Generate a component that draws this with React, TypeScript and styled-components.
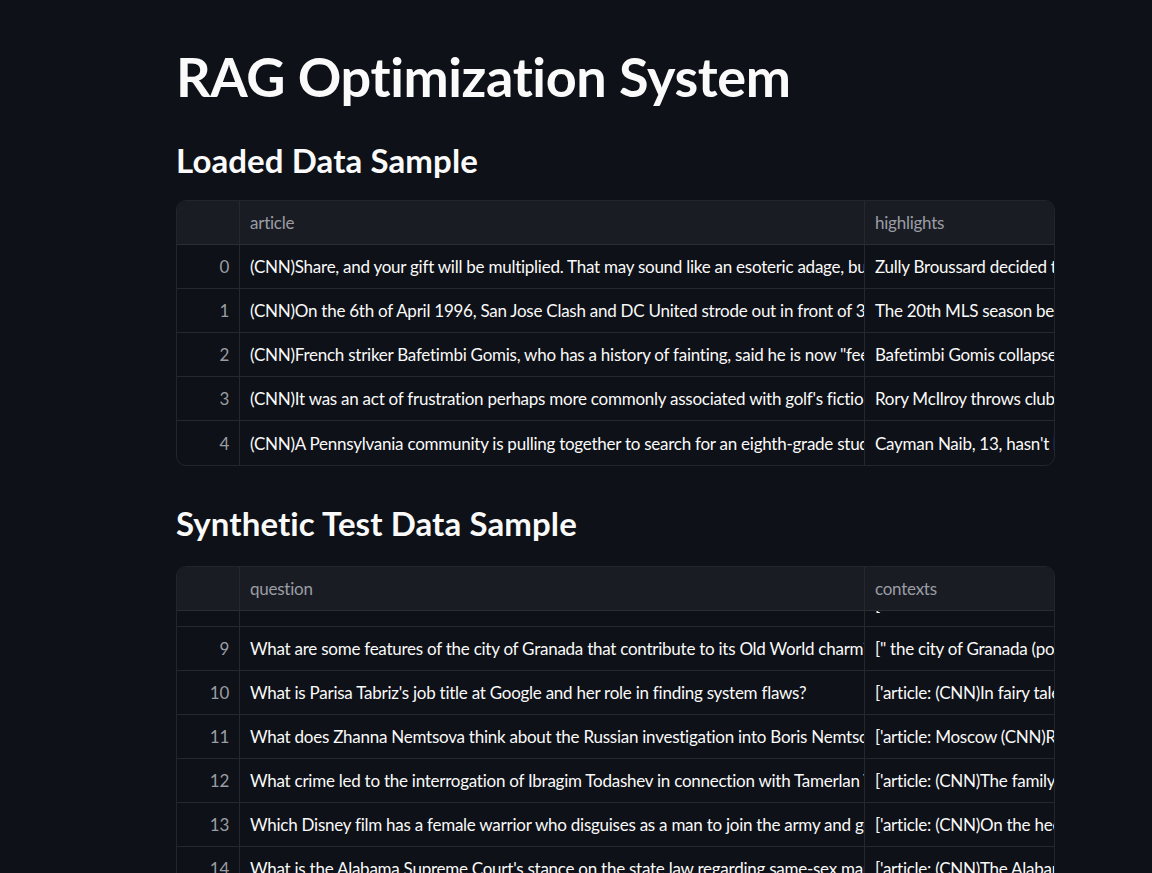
import { styled, createGlobalStyle } from "styled-components";

const GlobalStyle = createGlobalStyle`
  html, body {
    margin: 0;
    padding: 0;
    background-color: #0e1117;
  }

  body {
    font-family: Lato, "Noto Sans", sans-serif;
    color: #fafafa;
  }
`;

type Column = { key: string; title: string };

const loadedColumns: Column[] = [
  { key: "article", title: "article" },
  { key: "highlights", title: "highlights" },
];

const loadedRows: Record<string, string>[] = [
  {
    article:
      "(CNN)Share, and your gift will be multiplied. That may sound like an esoteric adage, but when Zully Broussard selflessly",
    highlights: "Zully Broussard decided to give a kidney to a stranger.",
  },
  {
    article:
      "(CNN)On the 6th of April 1996, San Jose Clash and DC United strode out in front of 31,683 expectant fans",
    highlights: "The 20th MLS season begins this weekend.",
  },
  {
    article:
      '(CNN)French striker Bafetimbi Gomis, who has a history of fainting, said he is now "feeling well" after collapsing',
    highlights: "Bafetimbi Gomis collapses during a Premier League game.",
  },
  {
    article:
      "(CNN)It was an act of frustration perhaps more commonly associated with golf's fictional anti-hero",
    highlights: "Rory McIlroy throws club into water at WGC Cadillac Championship.",
  },
  {
    article:
      "(CNN)A Pennsylvania community is pulling together to search for an eighth-grade student who has been missing",
    highlights: "Cayman Naib, 13, hasn't been heard from since Wednesday.",
  },
];

const syntheticColumns: Column[] = [
  { key: "question", title: "question" },
  { key: "contexts", title: "contexts" },
];

// the grid is scrolled down so that row 8 is only just showing
const syntheticRows: Record<string, string>[] = [
  { question: "What did the museum announce about its new exhibit?", contexts: '[" the museum is home to' },
  {
    question:
      "What are some features of the city of Granada that contribute to its Old World charm?",
    contexts: '[" the city of Granada (pop. 250,000)',
  },
  {
    question:
      "What is Parisa Tabriz's job title at Google and her role in finding system flaws?",
    contexts: "['article: (CNN)In fairy tales, the princess",
  },
  {
    question:
      "What does Zhanna Nemtsova think about the Russian investigation into Boris Nemtsov's murder?",
    contexts: "['article: Moscow (CNN)Russian",
  },
  {
    question:
      "What crime led to the interrogation of Ibragim Todashev in connection with Tamerlan Tsarnaev?",
    contexts: "['article: (CNN)The family of",
  },
  {
    question:
      "Which Disney film has a female warrior who disguises as a man to join the army and go to war?",
    contexts: "['article: (CNN)On the heels of",
  },
  {
    question:
      "What is the Alabama Supreme Court's stance on the state law regarding same-sex marriage?",
    contexts: "['article: (CNN)The Alabama Supreme",
  },
  { question: "What did the report reveal about airline safety?", contexts: "['article: (CNN)A report" },
];

function DataFrame({
  columns,
  rows,
  start = 0,
  offset = 0,
}: {
  columns: Column[];
  rows: Record<string, string>[];
  start?: number;
  offset?: number;
}) {
  return (
    <Frame>
      <HeaderRow>
        <IndexHead />
        {columns.map((c) => (
          <HeadCell key={c.key}>{c.title}</HeadCell>
        ))}
      </HeaderRow>
      <Body>
        <Rows $offset={offset}>
          {rows.map((row, i) => (
            <Row key={i}>
              <IndexCell>{start + i}</IndexCell>
              {columns.map((c) => (
                <Cell key={c.key}>{row[c.key]}</Cell>
              ))}
            </Row>
          ))}
        </Rows>
      </Body>
    </Frame>
  );
}

export default function App() {
  return (
    <>
      <GlobalStyle />
      <Main>
        <Title>RAG Optimization System</Title>
        <Heading>Loaded Data Sample</Heading>
        <DataFrame columns={loadedColumns} rows={loadedRows} />
        <Heading $spaced>Synthetic Test Data Sample</Heading>
        <DataFrame
          columns={syntheticColumns}
          rows={syntheticRows}
          start={8}
          offset={28}
        />
      </Main>
    </>
  );
}

const Main = styled.div`
  display: flex;
  flex-direction: column;

  width: 879px;

  padding: 45px 0 60px 176px;
`;

const Title = styled.h1`
  margin: 0;

  font-size: 54px;
  font-weight: 700;
  line-height: 1.2;
  letter-spacing: -0.4px;
`;

const Heading = styled.h2<{ $spaced?: boolean }>`
  margin: ${(p) => (p.$spaced ? "38px 0 22px" : "31px 0 20px")};

  font-size: 33px;
  font-weight: 700;
  line-height: 1.2;
  letter-spacing: 0.1px;
`;

const Frame = styled.div`
  display: flex;
  flex-direction: column;

  border: 1px solid #23252d;
  border-radius: 10px;

  overflow: hidden;
`;

const grid = `
  display: grid;
  grid-template-columns: 63px 625px 400px;

  height: 44px;

  font-size: 17px;
  letter-spacing: -0.25px;
`;

const HeaderRow = styled.div`
  ${grid}

  background-color: #1a1c24;

  border-bottom: 1px solid #2b2d35;
  box-sizing: border-box;
`;

const Body = styled.div`
  overflow: hidden;
`;

const Rows = styled.div<{ $offset: number }>`
  display: flex;
  flex-direction: column;

  margin-top: ${(p) => -p.$offset}px;
`;

const Row = styled.div`
  ${grid}

  flex-shrink: 0;

  border-bottom: 1px solid #262830;
  box-sizing: border-box;

  &:last-child {
    border-bottom: none;
  }
`;

const BaseCell = styled.div`
  display: flex;
  align-items: center;

  padding: 0 10px;

  border-right: 1px solid #262830;

  white-space: nowrap;
  overflow: hidden;
`;

const IndexHead = styled(BaseCell)``;

const HeadCell = styled(BaseCell)`
  color: #9b9da4;
`;

const IndexCell = styled(BaseCell)`
  justify-content: flex-end;

  color: #9b9da4;
`;

const Cell = styled(BaseCell)`
  color: #fafafa;
`;
